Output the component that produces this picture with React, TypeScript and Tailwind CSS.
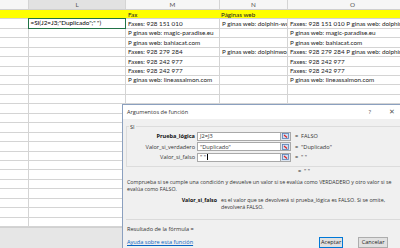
import { useState } from "react"

type Row = { k?: string; l?: string; m?: string; n?: string; o?: string }

const rows: Row[] = [
  { m: "Faxes: 928 151 010", n: "P ginas web: dolphin-world.com", o: "Faxes: 928 151 010 P ginas web: dolphin-world.com" },
  { m: "P ginas web: magic-paradise.eu", o: "P ginas web: magic-paradise.eu" },
  { m: "P ginas web: bahiacat.com", o: "P ginas web: bahiacat.com" },
  { m: "Faxes: 928 279 284", n: "P ginas web: dolphinworld.com", o: "Faxes: 928 279 284 P ginas web: dolphinworld.com" },
  { m: "Faxes: 928 242 977", o: "Faxes: 928 242 977" },
  { m: "Faxes: 928 242 977", o: "Faxes: 928 242 977" },
  { m: "P ginas web: lineassalmon.com", o: "P ginas web: lineassalmon.com" },
]

const cols = [
  { key: "k", w: "w-[29px]", label: "" },
  { key: "l", w: "w-[97px]", label: "L" },
  { key: "m", w: "w-[94px]", label: "M" },
  { key: "n", w: "w-[68px]", label: "N" },
  { key: "o", w: "w-[130px]", label: "O" },
] as const

function Cell({ w, text, clip, z }: { w: string; text?: string; clip: boolean; z: number }) {
  return (
    <div
      className={`${w} shrink-0 h-full border-r border-[#d4d4d4] relative ${clip ? "overflow-hidden" : "overflow-visible"}`}
      style={{ zIndex: z }}
    >
      {text && (
        <span className="absolute left-[2px] bottom-[0px] whitespace-nowrap leading-[9px]">{text}</span>
      )}
    </div>
  )
}

function Sheet() {
  const blank = Array.from({ length: 15 }, () => ({}) as Row)
  const all = [...rows, ...blank]
  return (
    <div className="flex flex-col text-[6.3px] text-[#222] font-['Lato',sans-serif]">
      {/* cabeceras de columna */}
      <div className="flex h-[10px] bg-[#f6f6f6] border-b border-[#cfcfcf] text-[#555]">
        {cols.map((c) => (
          <div
            key={c.key}
            className={`${c.w} shrink-0 h-full border-r border-[#d4d4d4] flex items-center justify-center ${c.key === "l" ? "bg-[#e2e2e2]" : ""}`}
          >
            {c.label}
          </div>
        ))}
      </div>
      {/* fila amarilla */}
      <div className="flex h-[9.4px] bg-[#ffff00] border-b border-[#d4d4d4]">
        <div className="w-[126px] shrink-0" />
        <div className="w-[94px] shrink-0 pl-[2px] leading-[9px]">Fax</div>
        <div className="w-[68px] shrink-0 pl-[1px] leading-[9px]">Páginas web</div>
      </div>
      {all.map((r, i) => (
        <div key={i} className="flex h-[9.45px] border-b border-[#d4d4d4] bg-white relative">
          {cols.map((c, ci) => {
            const next = cols[ci + 1]
            const clip = next ? Boolean(r[next.key]) : true
            return <Cell key={c.key} w={c.w} text={r[c.key]} clip={clip} z={cols.length - ci} />
          })}
          {i === 0 && (
            <div className="absolute left-[28px] top-[-1px] w-[98px] h-[10.5px] border-[1.5px] border-[#217346] bg-white z-10 leading-[8px] pl-[1.5px] text-black">
              =SI(J2=J3;"Duplicado";" ")
            </div>
          )}
        </div>
      ))}
    </div>
  )
}

function ArgRow({ label, bold, value, result, cursor }: { label: string; bold?: boolean; value: string; result: string; cursor?: boolean }) {
  return (
    <div className="flex items-center h-[10.5px]">
      <div className={`w-[70px] text-right pr-[2px] ${bold ? "font-bold text-[#111]" : "text-[#333]"}`}>{label}</div>
      <div className="w-[84px] h-[9px] bg-white border border-[#a9a9a9] flex items-center pl-[2px] text-[#333]">
        {value}
        {cursor && <span className="inline-block w-px h-[6px] bg-black ml-[1px]" />}
      </div>
      <div className="w-[10px] h-[9px] bg-[#dde6f2] border border-[#a9a9a9] border-l-0 flex items-center justify-center">
        <svg width="7" height="6" viewBox="0 0 7 6">
          <rect x="0.5" y="0.5" width="6" height="5" fill="#cfe0f4" stroke="#5b7fb3" strokeWidth="0.8" />
          <path d="M2 2 L5 4.5" stroke="#d22" strokeWidth="1.2" />
        </svg>
      </div>
      <div className="pl-[4px] text-[#333]">=&nbsp;&nbsp;{result}</div>
    </div>
  )
}

function Dialog() {
  const [open] = useState(true)
  if (!open) return null
  return (
    <div className="absolute left-[122px] top-[104px] w-[290px] h-[160px] border border-[#8ba0bf] bg-[#f0f0f0] flex flex-col text-[5.6px] font-['Open_Sans',sans-serif] text-[#333] z-20">
      <div className="h-[14px] bg-white flex items-center pl-[4px] pr-[16px] shrink-0">
        <span className="text-[#333]">Argumentos de función</span>
        <span className="ml-auto mr-[18px] text-[#555] text-[6px]">?</span>
        <span className="text-[#555] text-[6.5px]">✕</span>
      </div>
      <div className="relative mt-[7px] ml-[3px] mr-[-4px] h-[41px] border border-[#dcdcdc] pt-[4px]">
        <span className="absolute left-[2px] top-[-4px] bg-[#f0f0f0] px-[1px]">SI</span>
        <ArgRow label="Prueba_lógica" bold value="J2=J3" result="FALSO" />
        <ArgRow label="Valor_si_verdadero" value={'"Duplicado"'} result={'"Duplicado"'} />
        <ArgRow label="Valor_si_falso" value={'" "'} result={'" "'} cursor />
      </div>
      <div className="pl-[175px] h-[8px] leading-[8px]">=&nbsp;&nbsp;" "</div>
      <div className="pl-[4px] text-[5.3px] leading-[6.5px] mt-[4px] w-[272px]">
        Comprueba si se cumple una condición y devuelve un valor si se evalúa como VERDADERO y otro valor si se evalúa como FALSO.
      </div>
      <div className="flex mt-[5px] text-[5.3px] leading-[6.5px]">
        <div className="w-[98px] text-right pr-[4px] font-bold text-[#111]">Valor_si_falso</div>
        <div className="w-[170px]">es el valor que se devolverá si prueba_lógica es FALSO. Si se omite, devolverá FALSO.</div>
      </div>
      <div className="ml-[3px] mt-[9px] border-t border-[#dadada]" />
      <div className="pl-[4px] mt-[6px] leading-[7px]">Resultado de la fórmula =</div>
      <div className="flex items-center pl-[4px] mt-[4px]">
        <span className="text-[#0563c1] underline leading-[7px]">Ayuda sobre esta función</span>
        <button className="ml-[126px] w-[24px] h-[11px] bg-[#e1e1e1] border border-[#0078d7] text-[5.6px] text-[#222] flex items-center justify-center">
          Aceptar
        </button>
        <button className="ml-[15px] w-[30px] h-[11px] bg-[#e1e1e1] border border-[#adadad] text-[5.6px] text-[#222] flex items-center justify-center">
          Cancelar
        </button>
      </div>
    </div>
  )
}

function App() {
  return (
    <div className="w-[400px] h-[248px] overflow-hidden relative bg-white">
      <Sheet />
      <div className="absolute left-0 right-0 top-[227px] bottom-0 bg-[#e6e6e6] border-t border-[#d0d0d0]" />
      <Dialog />
    </div>
  )
}

export default App
